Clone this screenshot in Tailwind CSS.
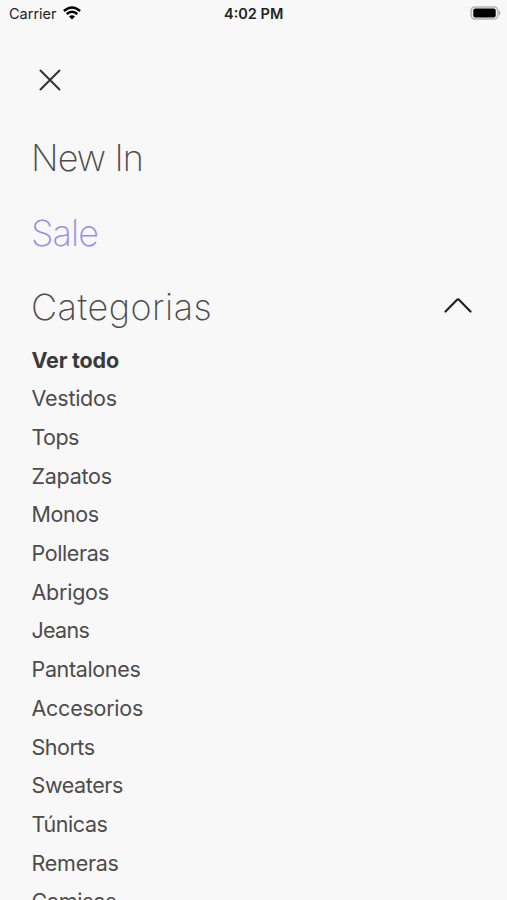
<!DOCTYPE html>
<html lang="es"><head><meta charset="utf-8"><title>Menú</title>
<script src="https://cdn.jsdelivr.net/npm/@tailwindcss/browser@4"></script></head>
<body class="h-[900px] overflow-hidden bg-[#f8f8f8] font-[Inter,sans-serif] text-[#4c4c4c]">
<header class="relative flex h-7 items-center justify-between pl-[9px] pr-[6px] text-[#222]">
<div class="flex items-center gap-[6px] text-[14.5px]"><span>Carrier</span>
<svg class="-mt-[2px] h-[14px] w-[18px]" viewBox="0 0 18 14" fill="none" stroke="#000"><path d="M.9 5Q9-2.2 17.1 5M3.7 8Q9 3.3 14.3 8" stroke-width="2.4"/><path d="M6 10.4Q9 8 12 10.4L9 13.4Z" fill="#000" stroke="none"/></svg></div>
<span class="absolute left-[224px] whitespace-nowrap text-[14.5px] font-semibold">4:02 PM</span>
<svg class="-mt-[2px] h-[14px] w-[31px]" viewBox="0 0 31 14"><rect x="1" y=".9" width="27" height="12.2" rx="4" fill="#eee" stroke="#b5b5b5" stroke-width="1.5"/><rect x="3.3" y="2.6" width="22.4" height="8.8" rx="2" fill="#000"/><path d="M29 4.5Q32 7 29 9.5Z" fill="#aaa"/></svg>
</header>
<button class="mt-[41px] ml-[39px] block h-[22px] w-[22px]" aria-label="Cerrar"><svg viewBox="0 0 22 22" fill="none" stroke="#333" stroke-width="2" stroke-linecap="round"><path d="M1.5 1.5 20.5 20.5M20.5 1.5 1.5 20.5"/></svg></button>
<nav class="pl-[31px] pr-[35px] pt-[30px]">
<div class="text-[36px] font-extralight leading-[74.5px]">
<div class="tracking-[-0.9px]">New In</div>
<div class="tracking-[-0.9px] text-[#988de8]">Sale</div>
<div class="flex items-center justify-between"><span class="tracking-[0.5px]">Categorias</span><svg class="mb-[5px] h-4 w-7" viewBox="0 0 28 16" fill="none" stroke="#222" stroke-width="2.2" stroke-linecap="round" stroke-linejoin="round"><path d="M1.5 14.5 12.8 3Q14 1.8 15.2 3L26.5 14.5"/></svg></div>
</div>
<ul class="-mt-[4px] pl-[0.5px] text-[21.5px] leading-[38.7px] tracking-[-0.25px]">
<li class="font-bold tracking-[-0.2px] text-[#3a3a3a]">Ver todo</li>
<li>Vestidos</li>
<li class="tracking-[-0.6px]">Tops</li>
<li>Zapatos</li>
<li class="tracking-[-0.4px]">Monos</li>
<li class="tracking-[-0.4px]">Polleras</li>
<li>Abrigos</li>
<li class="tracking-[-0.7px]">Jeans</li>
<li class="tracking-[-0.35px]">Pantalones</li>
<li>Accesorios</li>
<li class="tracking-[-0.5px]">Shorts</li>
<li class="tracking-[-0.4px]">Sweaters</li>
<li class="tracking-[-0.4px]">Túnicas</li>
<li>Remeras</li>
<li>Camisas</li>
</ul>
</nav>
</body></html>
